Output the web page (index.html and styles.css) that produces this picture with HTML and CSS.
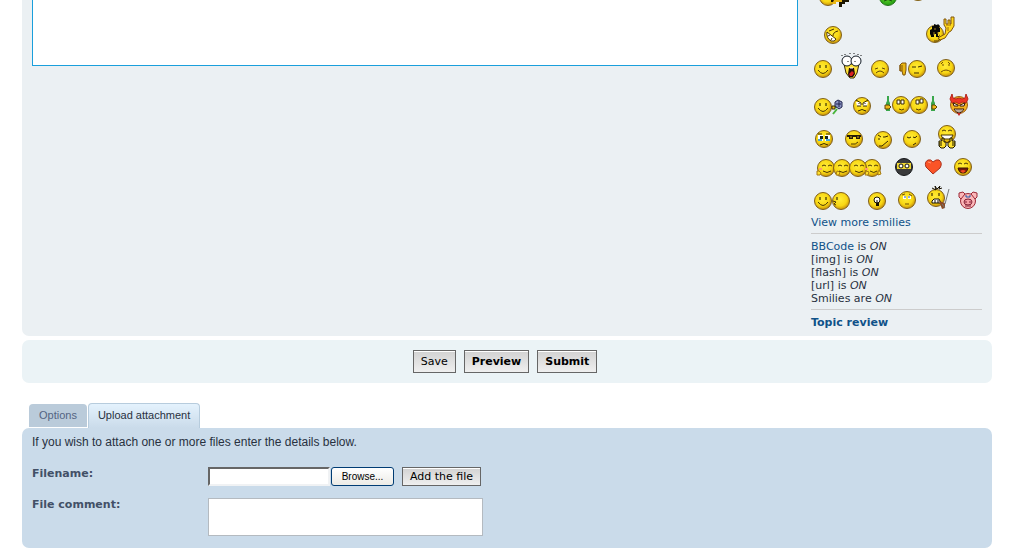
FILE: index.html
```html
<!DOCTYPE html>
<html lang="en">
<head>
<meta charset="utf-8">
<title>Post a reply</title>
<link rel="stylesheet" href="styles.css">
</head>
<body>
<svg class="defs" width="0" height="0" aria-hidden="true">
  <defs>
    <radialGradient id="gold" cx=".45" cy=".4" r=".6"><stop offset="0" stop-color="#ffec38"/><stop offset=".65" stop-color="#f8d713"/><stop offset="1" stop-color="#c79009"/></radialGradient>
    <radialGradient id="green" cx=".45" cy=".4" r=".6"><stop offset="0" stop-color="#7df53a"/><stop offset="1" stop-color="#239a10"/></radialGradient>
    <circle id="f" r="8.5" fill="url(#gold)" stroke="#80601c"/>
    <g id="hand"><path d="M0 1h3v-3h2v4h2v4l-2 2h-3l-2-2z" fill="#ffe22e" stroke="#1c1600"/><path d="M0 3h3M0 5h3" stroke="#1c1600"/></g>
  </defs>
</svg>
<main class="page">
  <form class="posting">
    <section class="panel editor">
      <textarea class="message" aria-label="Message"></textarea>
      <aside class="smiley-box">
        <div class="smilies">
          <a href="#"><svg width="59" height="12" viewBox="811 0 59 12"><use href="#f" x="828" y="-3"/><path d="M831 0h18v2h-4v2h-3v3h-3v-5h-8z" fill="#1c1600"/><path d="M834 0h8v2h-6v2h-4z" fill="#eab714"/></svg></a>
          <a href="#"><svg width="35" height="12" viewBox="870 0 35 12"><circle cx="888" cy="-3" r="8.5" fill="url(#green)" stroke="#28741c"/><path d="M884 1q4-3 8 0" fill="none" stroke="#184c0c"/></svg></a>
          <a href="#"><svg width="77" height="12" viewBox="905 0 77 12"><use href="#f" x="918" y="-8"/></svg></a>
        </div>
        <div class="smilies">
          <a href="#"><svg width="39" height="36" viewBox="811 12 39 36"><use href="#f" x="833" y="35"/><path d="M827 32l9 7q-1 3-5 2-5-3-4-9z" fill="#fff" stroke="#4a3300"/><path d="M829 31l5-2M833 36q0-4 5-5M828 36l2-1M831 40l1-2" stroke="#4a3300" fill="none"/></svg></a>
          <a href="#"><svg width="132" height="36" viewBox="850 12 132 36"><use href="#f" x="935" y="34"/><path d="M938 38l7-4 1-6-2-3v-6h2v5h2v-4h2v4h1v-7h3v9l-3 5-2 1-4 6-5 2z" fill="#ffd91d" stroke="#80550c"/><path d="M946 25h5M948 27v4" stroke="#a26c09"/><path d="M930 36v-6l2-1v-3h2v-2l3 1 1-1 2 2-1 2h1v4h-2v4h2v-2l-1 3h-3v-3h-2v3h-3v-3z" fill="#090806"/><path d="M934 29h2M934 35v-3M938 34v-2" stroke="#9c7920"/><path d="M934 41q4 1 6-2" fill="none" stroke="#56410b"/></svg></a>
        </div>
        <div class="smilies">
          <a href="#"><svg width="27" height="38" viewBox="811 48 27 38"><use href="#f" x="823" y="69"/><path d="M820 65v3M826 65v3" stroke="#171000"/><path d="M818 70q5 7 10 0" fill="none" stroke="#4b3605"/></svg></a>
          <a href="#"><svg width="30" height="38" viewBox="838 48 30 38"><path d="M844 64l2 9 4 5h4l3-5 2-9z" fill="#ffe239" stroke="#392a04"/><circle cx="847" cy="61" r="5" fill="#fff" stroke="#111a23"/><circle cx="856" cy="61" r="5" fill="#fff" stroke="#111a23"/><path d="M842 55v1M845 54v1M850 53v1M854 53v1M858 54v1M861 55v1M848 61v1M855 61v1" stroke="#101010"/><path d="M849 68h5l1 6-2 3h-4l-1-3z" fill="#230b09"/><path d="M849 74l3-3 2 2-2 3h-2z" fill="#db2222"/><path d="M850 68h3" stroke="#fff"/></svg></a>
          <a href="#"><svg width="26" height="38" viewBox="868 48 26 38"><use href="#f" x="880" y="69"/><path d="M875 69l3-1M882 68l3 1M876 73q4-4 8 0" fill="none" stroke="#624507"/></svg></a>
          <a href="#"><svg width="38" height="38" viewBox="894 48 38 38"><use href="#f" x="917" y="69"/><path d="M900 71v-6l2-2h4v7l-1 5h-2l-1-4z" fill="#eab714" stroke="#80550c"/><path d="M899 66h4M899 68h4M899 70h4" stroke="#80550c"/><path d="M912 67h4M918 67l4-1M914 73h5" stroke="#3c2a02"/></svg></a>
          <a href="#"><svg width="50" height="38" viewBox="932 48 50 38"><use href="#f" x="946" y="68"/><path d="M941 64l2-2M948 62l2 2M943 64v2M949 64v2M941 72q5-4 10 0" fill="none" stroke="#725007"/></svg></a>
        </div>
        <div class="smilies">
          <a href="#"><svg width="37" height="36" viewBox="811 86 37 36"><use href="#f" x="823" y="107"/><path d="M820 103v3M826 103v3" stroke="#171000"/><path d="M818 108q5 7 10 0" fill="none" stroke="#4b3605"/><path d="M832 107h5M833 114l4-5" stroke="#48b53b" stroke-width="2"/><path d="M832 106h3v3h-3z" fill="#f4c51d" stroke="#392a04"/><path d="M835 102l3-2 4 2v5l-3 2-4-3z" fill="#8b94c4" stroke="#20254e"/><path d="M836 104h5M839 101v6" stroke="#20254e"/></svg></a>
          <a href="#"><svg width="34" height="36" viewBox="848 86 34 36"><use href="#f" x="862" y="106"/><path d="M856 102h5v4h-4zM863 102h5l-1 4h-4z" fill="#fff"/><path d="M856 100l5 3v2M868 100l-5 3v2M857 106h4M863 106h4M859 103v1M865 103v1M858 111q4-3 8 0" fill="none" stroke="#362601"/></svg></a>
          <a href="#"><svg width="62" height="36" viewBox="882 86 62 36"><use href="#f" x="901" y="105"/><use href="#f" x="919" y="105"/><path d="M887 96h2v5l1 2v8h-4v-8l1-2zM932 96h2v5l1 2v8h-4v-8l1-2z" fill="#3aa74c"/><path d="M885 105h4l2 2-2 2h-4zM932 105h3l2 2-2 2h-3z" fill="#efb919" stroke="#624507"/><path d="M897 100h3v4h-3zM901 100h3v4h-3zM916 100h3v4h-3zM920 99h3v4h-3z" fill="#fff" stroke="#3d2b04"/><path d="M899 109q3 2 5 0M916 109q3 2 5 0" fill="none" stroke="#4b3605"/></svg></a>
          <a href="#"><svg width="38" height="36" viewBox="944 86 38 36"><circle cx="959" cy="105" r="8.5" fill="#f4b31e" stroke="#9e5b13"/><path d="M952 94l1 4 3 1 3-1 3 1 3-1 1-4 2 5-2 4-4-1-3 2-3-2-4 1-2-4z" fill="#ee3425" stroke="#b3271b"/><path d="M953 103l5 2v1h-4zM965 103l-5 2v1h4z" fill="#fff" stroke="#3b1701"/><path d="M954 109h10q-2 4-5 4t-5-4z" fill="#fff" stroke="#3b1701"/><path d="M957 109v3M959 109v4M961 109v3" stroke="#795539"/><path d="M957 113h4l-2 3z" fill="#c3251d"/></svg></a>
        </div>
        <div class="smilies">
          <a href="#"><svg width="28" height="31" viewBox="811 122 28 31"><use href="#f" x="824" y="139"/><path d="M818 135h5v6h-5zM825 135h5v6h-5z" fill="#fff"/><path d="M820 136h3v3h-3zM825 136h3v3h-3z" fill="#15211d"/><path d="M818 140h4M826 140h4" stroke="#48a7d8" stroke-width="2"/><path d="M820 145q4-3 8 0M818 134h4M826 134h4" fill="none" stroke="#362601"/></svg></a>
          <a href="#"><svg width="30" height="31" viewBox="839 122 30 31"><use href="#f" x="854" y="139"/><path d="M847 136h14M849 138h4M856 138h4" stroke="#231b0a" stroke-width="2"/><path d="M850 137h2M857 137h2" stroke="#d9ab1f"/><path d="M851 144q5 1 7-2" fill="none" stroke="#4b3605"/></svg></a>
          <a href="#"><svg width="29" height="31" viewBox="869 122 29 31"><use href="#f" x="883" y="140"/><path d="M878 135l3 2M885 137l3-1M878 139h2M884 136v2M879 146h3l6-5" fill="none" stroke="#362601"/></svg></a>
          <a href="#"><svg width="32" height="31" viewBox="898 122 32 31"><use href="#f" x="912" y="139"/><path d="M907 137q2 2 4 0M913 137q2 2 4-1M913 145l3-2" fill="none" stroke="#362601"/></svg></a>
          <a href="#"><svg width="52" height="31" viewBox="930 122 52 31"><use href="#f" x="947" y="134"/><path d="M942 131q2-2 4 0M948 131q2-2 4 0" fill="none" stroke="#4b3605"/><path d="M941 135h12l-2 4h-8z" fill="#fff" stroke="#4b3605"/><use href="#hand" x="939" y="140"/><use href="#hand" transform="translate(955 140) scale(-1 1)"/></svg></a>
        </div>
        <div class="smilies">
          <a href="#"><svg width="77" height="28" viewBox="811 153 77 28"><use href="#f" x="826" y="168"/><use href="#f" x="842" y="168"/><use href="#f" x="872" y="168"/><use href="#f" x="858" y="168"/><path d="M817 171h2l2 2-1 2h-3zM837 171l3 1-1 3h-3zM866 171l3 1-1 3h-3zM878 171h2l1 3-3 1z" fill="#ffe22e" stroke="#a87b13"/><path d="M822 166q2-2 4 0M828 166q2-2 4 0M838 166q2-2 4 0M844 166q2-2 4 0M854 166q2-2 4 0M860 166q2-2 4 0M868 166q2-2 4 0M874 166q2-2 4 0M823 171q4 3 8 0M839 171q4 3 8 0M855 171q4 3 8 0M870 171q4 3 7 0" fill="none" stroke="#4b3605"/><path d="M819 169h3M865 169h3" stroke="#ff9c70" stroke-width="2"/></svg></a>
          <a href="#"><svg width="31" height="28" viewBox="888 153 31 28"><circle cx="904" cy="167" r="8.5" fill="#393a3b" stroke="#151719"/><path d="M897 163h14v6h-14z" fill="#eed634"/><circle cx="901" cy="166" r="2" fill="#fff" stroke="#111"/><circle cx="907" cy="166" r="2" fill="#fff" stroke="#111"/></svg></a>
          <a href="#"><svg width="29" height="28" viewBox="919 153 29 28"><path d="M933 174l-7-7q-2-5 2-7 3-1 5 2 3-3 6-2 4 3 1 8z" fill="#fb5427" stroke="#a93320"/><path d="M928 162l3 1" stroke="#ff9770"/></svg></a>
          <a href="#"><svg width="34" height="28" viewBox="948 153 34 28"><use href="#f" x="963" y="167"/><path d="M958 164q2-2 4 0M964 164q2-2 4 0" fill="none" stroke="#4b3605"/><path d="M958 168h10q-1 5-5 5t-5-5z" fill="#731908" stroke="#3d1704"/><path d="M960 171q3-2 6 0l-3 2z" fill="#f34823"/></svg></a>
        </div>
        <div class="smilies">
          <a href="#"><svg width="49" height="34" viewBox="811 181 49 34"><use href="#f" x="841" y="201"/><use href="#f" x="823" y="201"/><path d="M820 197v3M826 197v3M837 197v3" stroke="#171000"/><path d="M818 202q5 7 10 0M833 201l3 1-2 2 2 1" fill="none" stroke="#4b3605"/></svg></a>
          <a href="#"><svg width="32" height="34" viewBox="860 181 32 34"><use href="#f" x="877" y="201"/><circle cx="877" cy="200" r="3" fill="#fff" stroke="#171000"/><path d="M876 203h3v3h-3z" fill="#171000"/><path d="M877 200v3" stroke="#171000"/></svg></a>
          <a href="#"><svg width="30" height="34" viewBox="892 181 30 34"><use href="#f" x="907" y="200"/><path d="M903 196h3v3h-3zM908 196h3v3h-3z" fill="#fff"/><path d="M904 197h2M908 197h2" stroke="#2454bd"/><path d="M902 195l3-1M909 194l3 2M905 204h4" stroke="#725007"/></svg></a>
          <a href="#"><svg width="32" height="34" viewBox="922 181 32 34"><use href="#f" x="936" y="198"/><path d="M932 188l4 2-1-4 2 3 3-3-1 3 3-1M932 193v3M939 193v3" fill="none" stroke="#171000"/><path d="M932 201l2-2h5l2 4h-9z" fill="#fff" stroke="#171000"/><path d="M935 200v3M938 200v3" stroke="#171000"/><path d="M939 201l6 2v5l-3 1z" fill="#8c4b25"/><path d="M942 204l3 4M945 204l4-15" stroke="#75787a"/></svg></a>
          <a href="#"><svg width="28" height="34" viewBox="954 181 28 34"><circle cx="968" cy="201" r="7.500" fill="#fbb8b9" stroke="#9c2937"/><path d="M959 193l4-1 2 2-4 5-2-2zM977 193l-4-1-2 2 4 5 2-2z" fill="#fbb8b9" stroke="#9c2937"/><ellipse cx="968" cy="202" rx="4" ry="3" fill="#f6a0a6" stroke="#801d32"/><path d="M966 201v2M970 201v2M965 206h6" stroke="#801d32"/><path d="M965 196h2v2M969 198v-2h2" fill="none" stroke="#235aaa"/></svg></a>
        </div>
        <a class="more" href="#">View more smilies</a>
        <p class="status"><a href="#">BBCode</a> is <em>ON</em><br>[img] is <em>ON</em><br>[flash] is <em>ON</em><br>[url] is <em>ON</em><br>Smilies are <em>ON</em></p>
        <p class="review"><a href="#">Topic review</a></p>
      </aside>
    </section>
    <section class="panel actions">
      <button class="button" type="button">Save</button>
      <button class="button strong" type="button">Preview</button>
      <button class="button strong" type="submit">Submit</button>
    </section>
    <nav class="tabs">
      <a class="tab" href="#">Options</a>
      <a class="tab active" href="#">Upload attachment</a>
    </nav>
    <section class="panel attach">
      <p class="hint">If you wish to attach one or more files enter the details below.</p>
      <div class="field file-field">
        <label for="filename">Filename:</label>
        <div class="controls">
          <input class="filename" id="filename" type="text">
          <button class="browse" type="button">Browse...</button>
          <button class="button add" type="button">Add the file</button>
        </div>
      </div>
      <div class="field">
        <label for="comment">File comment:</label>
        <textarea class="comment" id="comment"></textarea>
      </div>
    </section>
  </form>
</main>
</body>
</html>
```
FILE: styles.css
```css
* { box-sizing: border-box; }
body {
  margin: 0;
  background: #fff;
  color: #28313f;
  font: 11px/13px "DejaVu Sans", Verdana, sans-serif;
}
a { color: #105289; text-decoration: none; }
p { margin: 0; }
textarea, input { margin: 0; background: #fff; resize: none; border-radius: 0; }
.defs { display: block; height: 0; }
.page { padding: 0 22px 12px; }
.panel { border-radius: 7px; }

.editor {
  display: flex;
  align-items: flex-start;
  gap: 13px;
  padding: 0 10px 7px;
  background: #ebf0f3;
  border-top-left-radius: 0;
  border-top-right-radius: 0;
}
.message {
  flex: 1;
  min-width: 0;
  height: 66px;
  border: 1px solid #1a9fdc;
  border-top: 0;
}
.smiley-box { width: 171px; }
.smilies { display: flex; }
.smilies a, .smilies svg { display: block; }
.more { display: block; margin-top: 1px; }
.status, .review { border-top: 1px solid #ccc; margin-top: 4px; padding-top: 6px; }
.review { font-weight: bold; }

.actions {
  display: flex;
  justify-content: center;
  gap: 8px;
  margin-top: 4px;
  padding: 10px 10px 10px 6px;
  background: #ebf3f6;
}
.button {
  height: 23px;
  padding: 0 7px;
  border: 1px solid #666;
  border-radius: 0;
  background: linear-gradient(#d2d2d2, #efefef);
  box-shadow: inset 0 1px #fff;
  color: #000;
  font: 11px/13px "DejaVu Sans", Verdana, sans-serif;
}
.strong { font-weight: bold; }

.tabs {
  display: flex;
  align-items: flex-end;
  gap: 1px;
  margin-top: 20px;
  padding-left: 7px;
  font: 11px/13px "Liberation Sans", Arial, sans-serif;
}
.tab {
  margin-bottom: 1px;
  padding: 5px 10px;
  border-radius: 4px 4px 0 0;
  background: #bacbda;
  color: #536482;
}
.tab.active {
  margin-bottom: 0;
  padding: 5px 9px 6px;
  border: 1px solid #b7ccdd;
  border-bottom: 0;
  background: linear-gradient(#e4f2fd, #cadbea);
  color: #28313f;
}

.attach { padding: 7px 10px 12px; background: #cadbea; }
.hint { font: 12px/14px "Liberation Sans", Arial, sans-serif; }
.field { display: grid; grid-template-columns: 176px 1fr; margin-top: 12px; }
.file-field { margin-top: 18px; }
.field label { color: #425067; font-weight: bold; }
.controls { display: flex; align-items: center; }
.filename {
  width: 122px;
  height: 19px;
  border: 2px solid #f0f2f4;
  border-top-color: #666;
  border-left-color: #666;
}
.browse {
  width: 63px;
  height: 19px;
  margin: 0 8px 0 1px;
  padding: 0;
  border: 1px solid #003c74;
  border-radius: 3px;
  background: linear-gradient(#fff, #ecebe6);
  color: #000;
  font: 10px/13px "Liberation Sans", Arial, sans-serif;
}
.add { height: 19px; }
.comment { display: block; width: 275px; height: 38px; border: 1px solid #b4bac0; }
```
